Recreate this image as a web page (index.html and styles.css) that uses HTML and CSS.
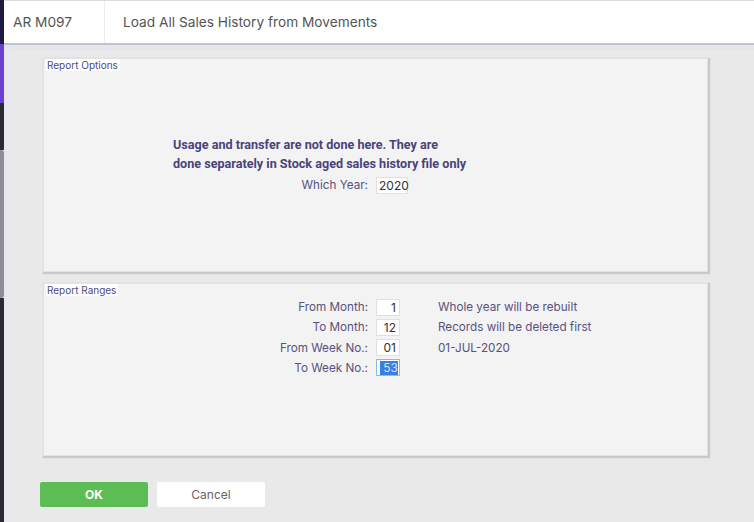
FILE: index.html
```html
<!DOCTYPE html>
<html>
<head>
<meta charset="utf-8">
<link rel="stylesheet" href="styles.css">
</head>
<body>
<div class="app">
  <div class="rail">
    <div class="rail-top"></div>
    <div class="rail-active"></div>
    <div class="rail-dark"></div>
    <div class="rail-thumb"></div>
    <div class="rail-rest"></div>
  </div>
  <div class="main">
    <header class="topbar">
      <div class="code">AR M097</div>
      <div class="title">Load All Sales History from Movements</div>
    </header>
    <div class="content">
      <section class="panel options">
        <div class="legend">Report Options</div>
        <div class="options-body">
          <p class="message">Usage and transfer are not done here. They are<br>done separately in Stock aged sales history file only</p>
          <div class="form">
            <label class="lbl">Which Year:</label>
            <span class="field year">2020</span>
          </div>
        </div>
      </section>
      <section class="panel ranges">
        <div class="legend">Report Ranges</div>
        <div class="form ranges-form">
          <label class="lbl">From Month:</label>
          <span class="field">1</span>
          <span class="note">Whole year will be rebuilt</span>
          <label class="lbl">To Month:</label>
          <span class="field">12</span>
          <span class="note">Records will be deleted first</span>
          <label class="lbl">From Week No.:</label>
          <span class="field">01</span>
          <span class="note">01-JUL-2020</span>
          <label class="lbl">To Week No.:</label>
          <span class="field focus"><span class="sel">53</span></span>
          <span class="note"></span>
        </div>
      </section>
      <div class="actions">
        <button class="btn ok">OK</button>
        <button class="btn cancel">Cancel</button>
      </div>
    </div>
  </div>
</div>
</body>
</html>
```
FILE: styles.css
```css
* { box-sizing: border-box; }
html, body { margin: 0; padding: 0; }
body {
  width: 754px;
  height: 522px;
  overflow: hidden;
  font-family: Inter, Roboto, "Liberation Sans", Arial, sans-serif;
  background: #e9e9e9;
}
.app {
  display: flex;
  height: 522px;
}
.rail {
  width: 4px;
  display: flex;
  flex-direction: column;
  flex: none;
}
.rail-top { height: 44px; background: #1f1b3f; }
.rail-active { height: 59px; background: #6a40d0; }
.rail-dark { height: 47px; background: #2b2a34; }
.rail-thumb { height: 148px; background: #8d8c99; border-radius: 0 3px 3px 0; }
.rail-rest { flex: 1; background: #2b2a34; }

.main {
  flex: 1;
  display: flex;
  flex-direction: column;
}
.topbar {
  height: 45px;
  display: flex;
  background: #fff;
  border-top: 1px solid #dcdce0;
  border-bottom: 2px solid #c3c3c7;
  color: #555;
  font-size: 13.7px;
}
.code {
  width: 101px;
  padding-left: 9px;
  border-right: 1px solid #ececec;
  display: flex;
  align-items: center;
}
.title {
  padding-left: 18px;
  display: flex;
  align-items: center;
}
.content {
  flex: 1;
  border-top: 5px solid #e6e5ee;
  border-left: 8px solid #e8e7ef;
  padding: 8px 46px 0 31px;
}
.panel {
  background: #f3f3f3;
  border: 1px solid #e2e2e2;
  box-shadow: 1px 1px 1px 1px #c9c9c9;
  padding: 0 2px;
}
.options { height: 214px; }
.ranges { height: 173px; margin-top: 11px; }
.legend {
  display: inline-block;
  background: #fff;
  color: #4f4a7e;
  font-size: 10px;
  line-height: 12px;
  padding: 0 2px 0 1px;
  vertical-align: top;
}
.options-body {
  padding-top: 56px;
}
.message {
  margin: 0 0 2px 127px;
  font-family: Roboto, "Liberation Sans", Arial, sans-serif;
  font-size: 12.6px;
  font-weight: bold;
  line-height: 19px;
  color: #49437a;
}
.form {
  display: grid;
  grid-template-columns: 195px 24px auto;
  column-gap: 8px;
  grid-auto-rows: 20px;
  align-items: center;
  margin-left: 127px;
  font-size: 11.7px;
}
.options .form { grid-template-columns: 195px 32px; }
.ranges-form {
  margin-top: -7px;
  grid-template-columns: 195px 24px auto;
  row-gap: 0.3px;
}
.lbl {
  text-align: right;
  color: #57527f;
}
.field {
  height: 17px;
  background: #fff;
  border: 1px solid #e0e0e0;
  color: #333;
  text-align: right;
  padding: 0 3px;
  line-height: 15px;
  font-size: 12px;
}
.year { text-align: left; padding-left: 2px; }
.field.focus {
  border-color: #7cc0f0;
  padding-right: 1px;
}
.sel {
  background: #3a7ee2;
  color: #cfe3ff;
  padding: 0 0 0 3px;
  display: inline-block;
  line-height: 14px;
}
.note {
  margin-left: 30px;
  color: #57527f;
}
.actions {
  display: flex;
  gap: 9px;
  margin-top: 26px;
  margin-left: -3px;
}
.btn {
  width: 108px;
  height: 25px;
  border: none;
  border-radius: 2px;
  font-family: Inter, Roboto, "Liberation Sans", Arial, sans-serif;
  font-size: 12px;
  padding: 0;
}
.ok {
  background: #5bbd53;
  color: #fff;
  font-weight: bold;
}
.cancel {
  background: #fff;
  color: #666;
}
```
